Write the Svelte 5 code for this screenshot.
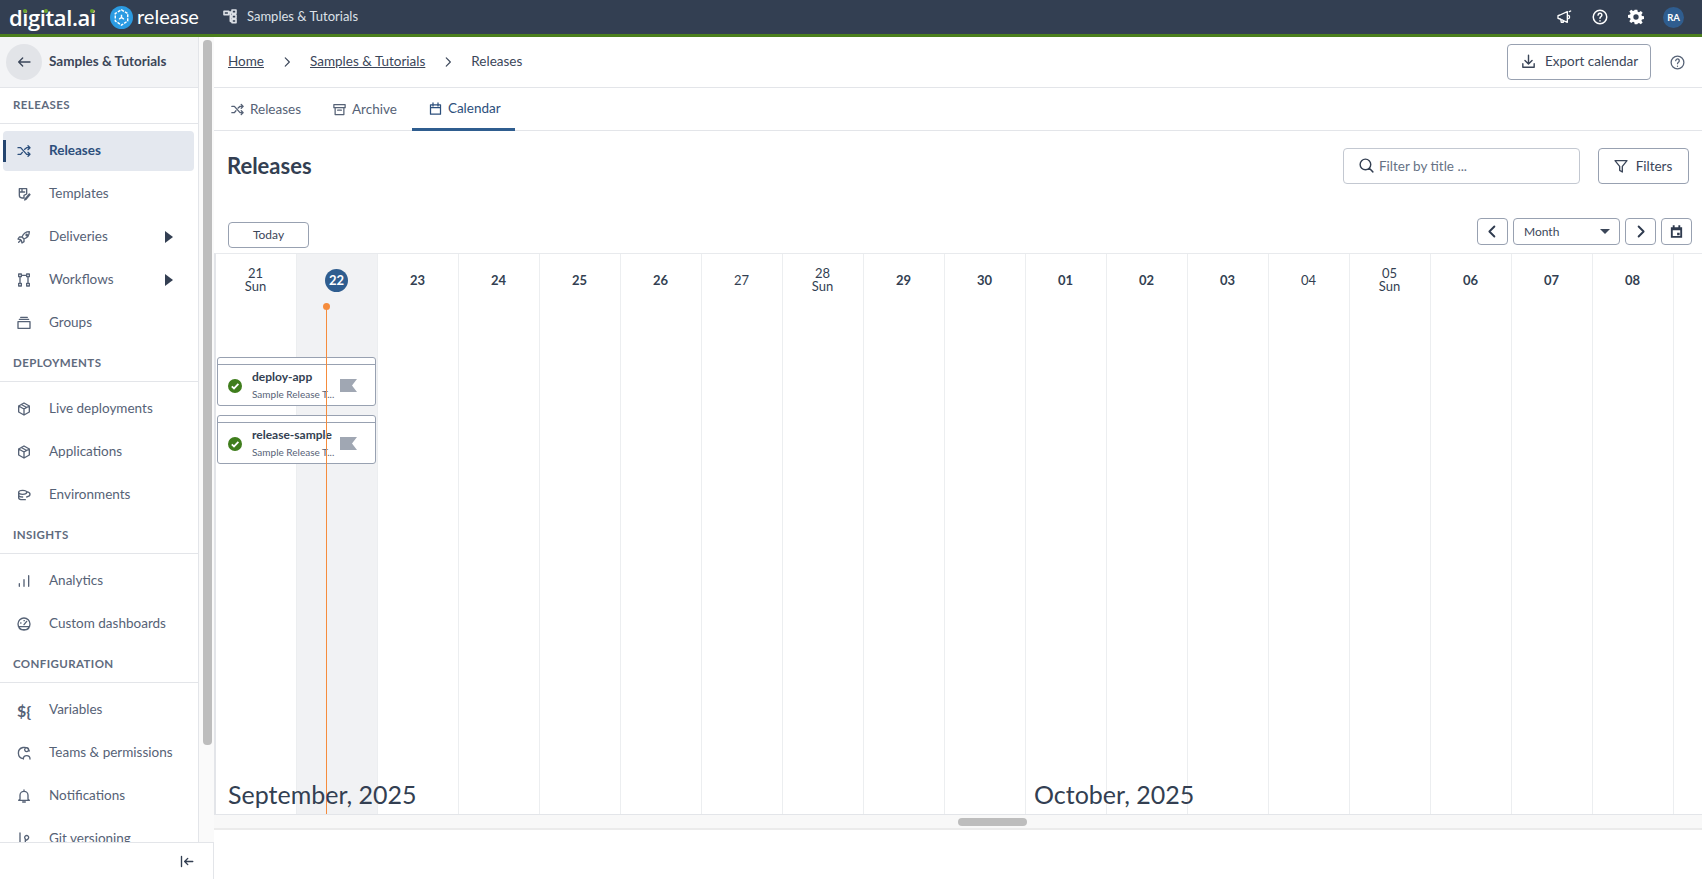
<script>
	const icons = {
		shuffle: 'M3 7h4l9 10h5M3 17h4l2.500-3M13 9.500L16 7h5M18 4l3 3-3 3M18 14l3 3-3 3',
		template: 'M5 4h11v8l-4 2v4H9a4 4 0 0 1-4-4zM5 9h8M9 4v5M14 19l6-7 1 1-6 7-2 1z',
		rocket: 'M20 4c-5 0-9 3-11 8l3 3c5-2 8-6 8-11zM9 12H5l-2 3 4 1M12 15v4l-3 2-1-4M7 17l-3 3M15 9a1 1 0 1 0 0-.1',
		flow: 'M4 3h4v4H4zM16 3h4v4h-4zM4 17h4v4H4zM16 17h4v4h-4zM8 5h8M6 7v10M18 7v10',
		groups: 'M3 10h18v10H3zM5 6.500h14M7 3.500h10',
		box: 'M12 3l8 4.500v9L12 21l-8-4.500v-9zM4 7.500l8 4.500 8-4.500M12 12v9M8 5.300l8 4.500',
		env: 'M4 8c0-2 3-3 6-3s6 1 6 3-3 3-6 3-6-1-6-3zM4 8v8c0 2 3 3 6 3h4M4 12c0 2 3 3 6 3M16 7c3 .5 5 2 5 4s-2 3.500-5 4',
		bars: 'M5 20v-4M12 20V10M19 20V4',
		gauge: 'M12 3a9 9 0 1 0 0 18 9 9 0 0 0 0-18zM12 13l4-5M5 16h14v2.500l-3 2h-8l-3-2zM7 10.500h.5M12 7h.5',
		teams: 'M20 9a8.500 8.500 0 1 0-9 11.500M16 10a3 3 0 1 0-.01 0M11 21c0-3 2-5 5-5s5 2 5 5',
		bell: 'M6 17V11a6 6 0 0 1 12 0v6l2 1.500H4zM10 21h4M12 3v2',
		git: 'M6 3v13a4 4 0 0 0 8 0v-4a3 3 0 1 1 4 0c-1 1-3 2-4 2M3 19l3 2',
		archive: 'M3 4h18v5H3zM5 9v11h14V9M9 13h6',
		calendar: 'M4 6h16v15H4zM4 10.500h16M8 3v5M16 3v5',
		download: 'M12 3v12M7 10.500l5 5 5-5M4 15v5h16v-5',
		help: 'M12 3a9 9 0 1 0 0 18 9 9 0 0 0 0-18zM9.500 9.500a2.500 2.500 0 1 1 3.800 2.100c-.9.6-1.300 1.100-1.300 2.100M12 17v.3',
		search: 'M10.500 3a7.500 7.500 0 1 0 0 15 7.500 7.500 0 0 0 0-15zM16 16l5 5',
		funnel: 'M3 4h18l-7 8.500V21l-4-2.500v-6z',
		back: 'M21 12H4M10 6l-6 6 6 6',
		collapse: 'M4 4v16M22 12H9M14 7l-5 5 5 5',
		chevron: 'M9 5l7 7-7 7',
		left: 'M15 4l-8 8 8 8',
		right: 'M9 4l8 8-8 8',
		tree: 'M3 5h7v5H3zM15 3h6v5h-6zM15 10.500h6v5h-6zM15 17h6v5h-6zM10 6h5M12.500 6v14h2.500M12.500 13h2.500',
		mega: 'M3 10v4l3 1 11 5V4L6 9zM7 15l1 5h3l-1-3.500M19 9.500a3 3 0 0 1 0 5M20 4l2-1'
	};

	const nav = [
		{ title: 'RELEASES', items: [
			{ label: 'Releases', icon: 'shuffle', active: true },
			{ label: 'Templates', icon: 'template' },
			{ label: 'Deliveries', icon: 'rocket', more: true },
			{ label: 'Workflows', icon: 'flow', more: true },
			{ label: 'Groups', icon: 'groups' }
		] },
		{ title: 'DEPLOYMENTS', items: [
			{ label: 'Live deployments', icon: 'box' },
			{ label: 'Applications', icon: 'box' },
			{ label: 'Environments', icon: 'env' }
		] },
		{ title: 'INSIGHTS', items: [
			{ label: 'Analytics', icon: 'bars' },
			{ label: 'Custom dashboards', icon: 'gauge' }
		] },
		{ title: 'CONFIGURATION', items: [
			{ label: 'Variables', glyph: '${' },
			{ label: 'Teams & permissions', icon: 'teams' },
			{ label: 'Notifications', icon: 'bell' },
			{ label: 'Git versioning', icon: 'git' }
		] }
	];

	const days = [
		{ n: '21', sub: 'Sun' }, { n: '22', today: true }, { n: '23' }, { n: '24' }, { n: '25' }, { n: '26' },
		{ n: '27', light: true }, { n: '28', sub: 'Sun' }, { n: '29' }, { n: '30' }, { n: '01' }, { n: '02' },
		{ n: '03' }, { n: '04', light: true }, { n: '05', sub: 'Sun' }, { n: '06' }, { n: '07' }, { n: '08' }, { n: '' }
	];

	const events = ['deploy-app', 'release-sample'];
</script>

{#snippet icon(name, size = 16, width = 2)}
	<svg class="ico" viewBox="0 0 24 24" width={size} height={size} fill="none" stroke="currentColor" stroke-width={width} stroke-linecap="round" stroke-linejoin="round">
		<path d={icons[name]} />
	</svg>
{/snippet}

<div class="app">
	<header class="topbar">
		<div class="logo">
			digital.ai
			<i class="dot d1"></i>
			<i class="dot d2"></i>
			<i class="dot d3"></i>
		</div>
		<svg class="release-mark" viewBox="0 0 24 24" width="23" height="23">
			<circle cx="12" cy="12" r="12" fill="#2b9be2" />
			<path d="M12 4l6.500 3.800v7.800L12 20l-6.500-4.400V7.800zM12 12V8M12 12l-3.500 2.400M12 12l3.500 2.400" fill="none" stroke="#fff" stroke-width="1.500" stroke-dasharray="3 1.200" />
		</svg>
		<span class="release-word">release</span>
		<span class="folder">{@render icon('tree', 16, 2.400)} Samples &amp; Tutorials</span>
		<div class="top-actions">
			{@render icon('mega', 16, 2)}
			{@render icon('help', 18, 2)}
			<svg viewBox="0 0 24 24" width="16" height="16" fill="#fff"><path fill-rule="evenodd" d="M10 1h4l.6 3.100 1.900.8L19.200 3l2.800 2.800-1.900 2.700.8 1.900 3.100.6v4l-3.100.6-.8 1.900 1.900 2.700-2.800 2.800-2.700-1.900-1.900.8L14 23h-4l-.6-3.100-1.900-.8L4.800 21 2 18.200l1.900-2.700-.8-1.900L0 13V9l3.100-.6.800-1.900L2 3.800 4.800 1l2.700 1.900 1.900-.8zM12 8a4 4 0 1 0 0 8 4 4 0 0 0 0-8z" /></svg>
			<span class="avatar">RA</span>
		</div>
	</header>

	<div class="body">
		<aside class="sidebar">
			<div class="side-main">
				<div class="side-col">
					<div class="side-head">
						<span class="back">{@render icon('back', 16, 2)}</span>
						<b>Samples &amp; Tutorials</b>
					</div>
					<nav>
						{#each nav as group}
							<div class="nav-title"><span>{group.title}</span></div>
							<ul>
								{#each group.items as item}
									<li class:active={item.active}>
										<span class="nav-ico">
											{#if item.glyph}<span class="glyph">{item.glyph}</span>{:else}{@render icon(item.icon, 16, 2)}{/if}
										</span>
										<span class="nav-label">{item.label}</span>
										{#if item.more}<span class="caret"></span>{/if}
									</li>
								{/each}
							</ul>
						{/each}
					</nav>
				</div>
				<div class="side-track"><div class="side-thumb"></div></div>
			</div>
			<div class="side-foot">{@render icon('collapse', 15, 2.200)}</div>
		</aside>

		<main>
			<div class="crumbs">
				<a href="#home">Home</a>
				<span class="sep">{@render icon('chevron', 14, 2)}</span>
				<a href="#folder">Samples &amp; Tutorials</a>
				<span class="sep">{@render icon('chevron', 14, 2)}</span>
				<span>Releases</span>
				<button class="btn export">{@render icon('download', 17, 2)} Export calendar</button>
				<span class="crumb-help">{@render icon('help', 17, 1.800)}</span>
			</div>

			<div class="tabs">
				<span class="tab">{@render icon('shuffle', 15, 2.200)} Releases</span>
				<span class="tab">{@render icon('archive', 15, 2)} Archive</span>
				<span class="tab on">{@render icon('calendar', 15, 2)} Calendar</span>
			</div>

			<div class="head">
				<h1>Releases</h1>
				<div class="search">{@render icon('search', 17, 2)} <span>Filter by title ...</span></div>
				<button class="btn filters">{@render icon('funnel', 16, 2)} Filters</button>
			</div>

			<div class="toolbar">
				<button class="btn today">Today</button>
				<div class="toolbar-right">
					<button class="btn small">{@render icon('left', 15, 3)}</button>
					<div class="btn month"><span>Month</span><i></i></div>
					<button class="btn small">{@render icon('right', 15, 3)}</button>
					<button class="btn small">
						<svg viewBox="0 0 24 24" width="15" height="15" fill="#2f3b4f"><path fill-rule="evenodd" d="M3 5h3V2h3v3h6V2h3v3h3v17H3zM6 10v9h12v-9zM13 14h4v4h-4z" /></svg>
					</button>
				</div>
			</div>

			<div class="calendar">
				<div class="days">
					{#each days as d}
						<div class="day" class:today-col={d.today}>
							<div class="day-label" class:light={d.light || d.sub}>
								{#if d.today}<span class="today-n">{d.n}</span>{:else}<span>{d.n}</span>{/if}
								{#if d.sub}<span>{d.sub}</span>{/if}
							</div>
						</div>
					{/each}
				</div>

				<div class="events">
					{#each events as ev}
						<div class="event">
							<div class="event-top"></div>
							<div class="event-body">
								<svg viewBox="0 0 24 24" width="14" height="14"><circle cx="12" cy="12" r="12" fill="#3f7d1c" /><path d="M6.500 12.500l3.800 3.700 7.500-8" fill="none" stroke="#fff" stroke-width="3" /></svg>
								<div class="event-text">
									<div class="event-title">{ev}</div>
									<div class="event-sub">Sample Release T...</div>
								</div>
								<svg class="flag" viewBox="0 0 17 13" width="17" height="13"><path d="M0 0h17l-5 6.500 5 6.500H0z" fill="#a0a7b3" /></svg>
							</div>
						</div>
					{/each}
				</div>

				<div class="now"></div>

				<div class="month-label sep-label">September, 2025</div>
				<div class="month-label oct-label">October, 2025</div>
			</div>

			<div class="hscroll"><div class="hthumb"></div></div>
		</main>
	</div>
</div>

<style>
	:global(body) {
		margin: 0;
		font-family: Lato, 'Liberation Sans', sans-serif;
		color: #3b4659;
	}

	.app {
		display: flex;
		flex-direction: column;
		height: 100vh;
		overflow: hidden;
		background: #fff;
	}

	.ico {
		flex: none;
		display: block;
	}

	.topbar {
		display: flex;
		align-items: center;
		height: 34px;
		flex: none;
		background: #333f52;
		border-bottom: 3px solid #4b7f1d;
		color: #fff;
	}

	.logo {
		position: relative;
		margin-left: 9px;
		width: 98px;
		font-family: 'Open Sans', sans-serif;
		font-size: 22px;
		font-weight: 600;
		letter-spacing: -0.4px;
		line-height: 26px;
	}

	.dot {
		position: absolute;
		top: 5px;
		width: 4px;
		height: 4px;
		border-radius: 50%;
		background: #6aa52d;
	}

	.d1 { left: 14px; }
	.d2 { left: 35px; }
	.d3 { left: 81px; }

	.release-mark {
		margin-left: 3px;
	}

	.release-word {
		margin-left: 4px;
		width: 62px;
		font-size: 20px;
		font-weight: 400;
		padding-bottom: 2px;
	}

	.folder {
		display: flex;
		align-items: center;
		gap: 9px;
		margin-left: 23px;
		font-size: 13px;
		color: #dde1e7;
		padding-bottom: 2px;
	}

	.top-actions {
		display: flex;
		align-items: center;
		gap: 19px;
		margin-left: auto;
		margin-right: 18px;
	}

	.avatar {
		display: flex;
		align-items: center;
		justify-content: center;
		width: 21px;
		height: 21px;
		border-radius: 50%;
		background: #2f5d8f;
		font-size: 9.5px;
		font-weight: 700;
	}

	.body {
		display: flex;
		flex: 1;
		min-height: 0;
	}

	.sidebar {
		display: flex;
		flex-direction: column;
		flex: none;
		width: 213px;
		border-right: 1px solid #e3e5e9;
	}

	.side-main {
		display: flex;
		flex: 1;
		min-height: 0;
	}

	.side-col {
		width: 198px;
		flex: none;
		overflow: hidden;
		border-right: 1px solid #e3e5e9;
	}

	.side-head {
		display: flex;
		align-items: center;
		gap: 7px;
		height: 50px;
		padding-left: 6px;
		background: #f3f4f6;
		border-bottom: 1px solid #e3e5e9;
		font-size: 13.500px;
	}

	.side-head b {
		font-weight: 700;
		padding-bottom: 2px;
	}

	.back {
		display: flex;
		align-items: center;
		justify-content: center;
		width: 36px;
		height: 36px;
		border-radius: 50%;
		background: #e2e4e8;
	}

	.nav-title {
		display: flex;
		align-items: center;
		height: 35px;
		padding-left: 13px;
		border-bottom: 1px solid #e3e5e9;
		font-size: 11.500px;
		font-weight: 700;
		letter-spacing: 0.4px;
		color: #5f6b7e;
	}

	.nav-title span {
		padding-bottom: 3px;
	}

	ul {
		list-style: none;
		margin: 0;
		padding: 7px 4px 0 3px;
	}

	li {
		position: relative;
		display: flex;
		align-items: center;
		height: 40px;
		margin-bottom: 3px;
		border-radius: 4px;
		font-size: 13.500px;
		color: #566276;
	}

	li.active {
		background: #e4e8ef;
		color: #2c4f7c;
		font-weight: 700;
	}

	li.active::before {
		content: '';
		position: absolute;
		left: 0;
		top: 9px;
		height: 22px;
		width: 3px;
		background: #24456f;
	}

	.nav-ico {
		display: flex;
		justify-content: center;
		width: 42px;
		padding-right: 3px;
		margin-right: 1px;
	}

	.nav-label {
		padding-bottom: 3px;
	}

	.glyph {
		font-size: 16px;
		font-weight: 700;
		line-height: 15px;
	}

	.caret {
		margin-left: auto;
		margin-right: 21px;
		border-left: 8px solid #333f52;
		border-top: 6px solid transparent;
		border-bottom: 6px solid transparent;
	}

	.side-track {
		flex: 1;
		padding: 3px 2px;
		background: #fafafa;
	}

	.side-thumb {
		width: 9px;
		height: 705px;
		margin-left: 2px;
		border-radius: 4px;
		background: #bdbdbd;
	}

	.side-foot {
		display: flex;
		justify-content: flex-end;
		align-items: center;
		flex: none;
		height: 36px;
		padding-right: 19px;
		border-top: 1px solid #e3e5e9;
		color: #333f52;
		background: #fff;
	}

	main {
		flex: 1;
		min-width: 0;
		display: flex;
		flex-direction: column;
	}

	.crumbs {
		display: flex;
		align-items: center;
		flex: none;
		height: 50px;
		padding-left: 14px;
		border-bottom: 1px solid #e3e5e9;
		font-size: 13.500px;
	}

	.crumbs a,
	.crumbs > span:not(.sep, .crumb-help) {
		color: #3b4659;
		margin-bottom: 2px;
	}

	.sep {
		display: flex;
		justify-content: center;
		width: 46px;
	}

	.btn {
		display: flex;
		align-items: center;
		justify-content: center;
		box-sizing: border-box;
		border: 1px solid #98a1b1;
		border-radius: 4px;
		background: #fff;
		font-family: inherit;
		font-size: 13.500px;
		color: #3b4659;
		padding: 0;
	}

	.export {
		gap: 8px;
		width: 144px;
		height: 36px;
		margin-left: auto;
		padding-bottom: 2px;
	}

	.crumb-help {
		margin: 0 16px 0 18px;
		color: #566276;
	}

	.tabs {
		display: flex;
		flex: none;
		height: 42px;
		padding-left: 16px;
		border-bottom: 1px solid #e3e5e9;
		font-size: 13.500px;
		color: #566276;
	}

	.tab {
		display: flex;
		align-items: center;
		gap: 5px;
		margin-right: 31px;
	}

	.tab.on {
		box-sizing: border-box;
		margin: 0 0 -1px -16px;
		padding: 0 14px 0 16px;
		border-bottom: 3px solid #2f5d8f;
		color: #2c4f7c;
	}

	.head {
		display: flex;
		align-items: center;
		flex: none;
		height: 36px;
		padding: 17px 13px 0 13px;
	}

	h1 {
		margin: 0 auto 2px 0;
		font-size: 22px;
		font-weight: 700;
		color: #333f52;
	}

	.search {
		display: flex;
		align-items: center;
		gap: 4px;
		box-sizing: border-box;
		width: 237px;
		height: 36px;
		padding: 0 0 1px 14px;
		border: 1px solid #c3c8d1;
		border-radius: 4px;
		font-size: 13.500px;
		color: #667285;
	}

	.search .ico {
		color: #333f52;
	}

	.filters {
		gap: 7px;
		width: 91px;
		height: 36px;
		margin-left: 18px;
		padding: 0 2px 1px 0;
	}

	.toolbar {
		display: flex;
		justify-content: space-between;
		align-items: flex-end;
		flex: none;
		height: 36px;
		padding: 0 10px 5px 14px;
		margin-top: 28px;
	}

	.today {
		width: 81px;
		height: 26px;
		font-size: 12px;
		padding-bottom: 1px;
	}

	.toolbar-right {
		display: flex;
		gap: 5px;
		margin-bottom: 3px;
	}

	.small {
		width: 31px;
		height: 27px;
		color: #2f3b4f;
	}

	.month {
		justify-content: space-between;
		width: 107px;
		height: 27px;
		padding: 0 9px 0 10px;
		font-size: 12px;
	}

	.month i {
		border-top: 5px solid #3b4659;
		border-left: 5px solid transparent;
		border-right: 5px solid transparent;
	}

	.calendar {
		position: relative;
		flex: none;
		height: 560px;
		overflow: hidden;
		border-top: 1px solid #e8eaed;
		border-left: 2px solid #e3e5e9;
	}

	.days {
		display: grid;
		grid-template-columns: repeat(19, 81px);
		height: 100%;
	}

	.day {
		box-sizing: border-box;
		border-right: 1px solid #eceef0;
	}

	.today-col {
		background: #f1f2f4;
	}

	.day-label {
		display: flex;
		flex-direction: column;
		align-items: center;
		justify-content: center;
		height: 52px;
		padding-right: 1px;
		font-size: 13px;
		font-weight: 700;
		line-height: 13px;
		color: #333f52;
	}

	.day-label.light {
		font-weight: 400;
	}

	.today-n {
		display: flex;
		align-items: center;
		justify-content: center;
		width: 23px;
		height: 23px;
		border-radius: 50%;
		background: #2f5d8f;
		color: #fff;
	}

	.now {
		position: absolute;
		left: 110px;
		top: 52px;
		bottom: 0;
		width: 1px;
		background: #f58c3c;
	}

	.now::before {
		content: '';
		position: absolute;
		left: -3px;
		top: -3px;
		width: 7px;
		height: 7px;
		border-radius: 50%;
		background: #f58c3c;
	}

	.events {
		position: absolute;
		left: 1px;
		top: 103px;
		display: flex;
		flex-direction: column;
		gap: 9px;
	}

	.event {
		box-sizing: border-box;
		width: 159px;
		height: 49px;
		border: 1px solid #98a1b1;
		border-radius: 3px;
		background: #fff;
	}

	.event-top {
		height: 6px;
		border-bottom: 1px solid #98a1b1;
	}

	.event-body {
		display: flex;
		align-items: center;
		height: 41px;
		padding-left: 10px;
	}

	.event-text {
		width: 88px;
		margin-left: 10px;
		white-space: nowrap;
	}

	.event-title {
		font-size: 12px;
		font-weight: 700;
		line-height: 14px;
		margin-bottom: 4px;
		color: #333f52;
	}

	.event-sub {
		font-size: 10px;
		line-height: 13px;
		color: #566276;
	}

	.month-label {
		position: absolute;
		bottom: 4px;
		font-size: 25px;
		line-height: 32px;
		color: #333f52;
	}

	.sep-label { left: 12px; }
	.oct-label { left: 818px; }

	.hscroll {
		flex: none;
		height: 13px;
		background: #f8f8f8;
		border-top: 1px solid #e3e5e9;
		border-bottom: 2px solid #ebebeb;
		padding-left: 744px;
		display: flex;
		align-items: center;
	}

	.hthumb {
		width: 69px;
		height: 8px;
		border-radius: 4px;
		background: #bdbdbd;
	}
</style>
